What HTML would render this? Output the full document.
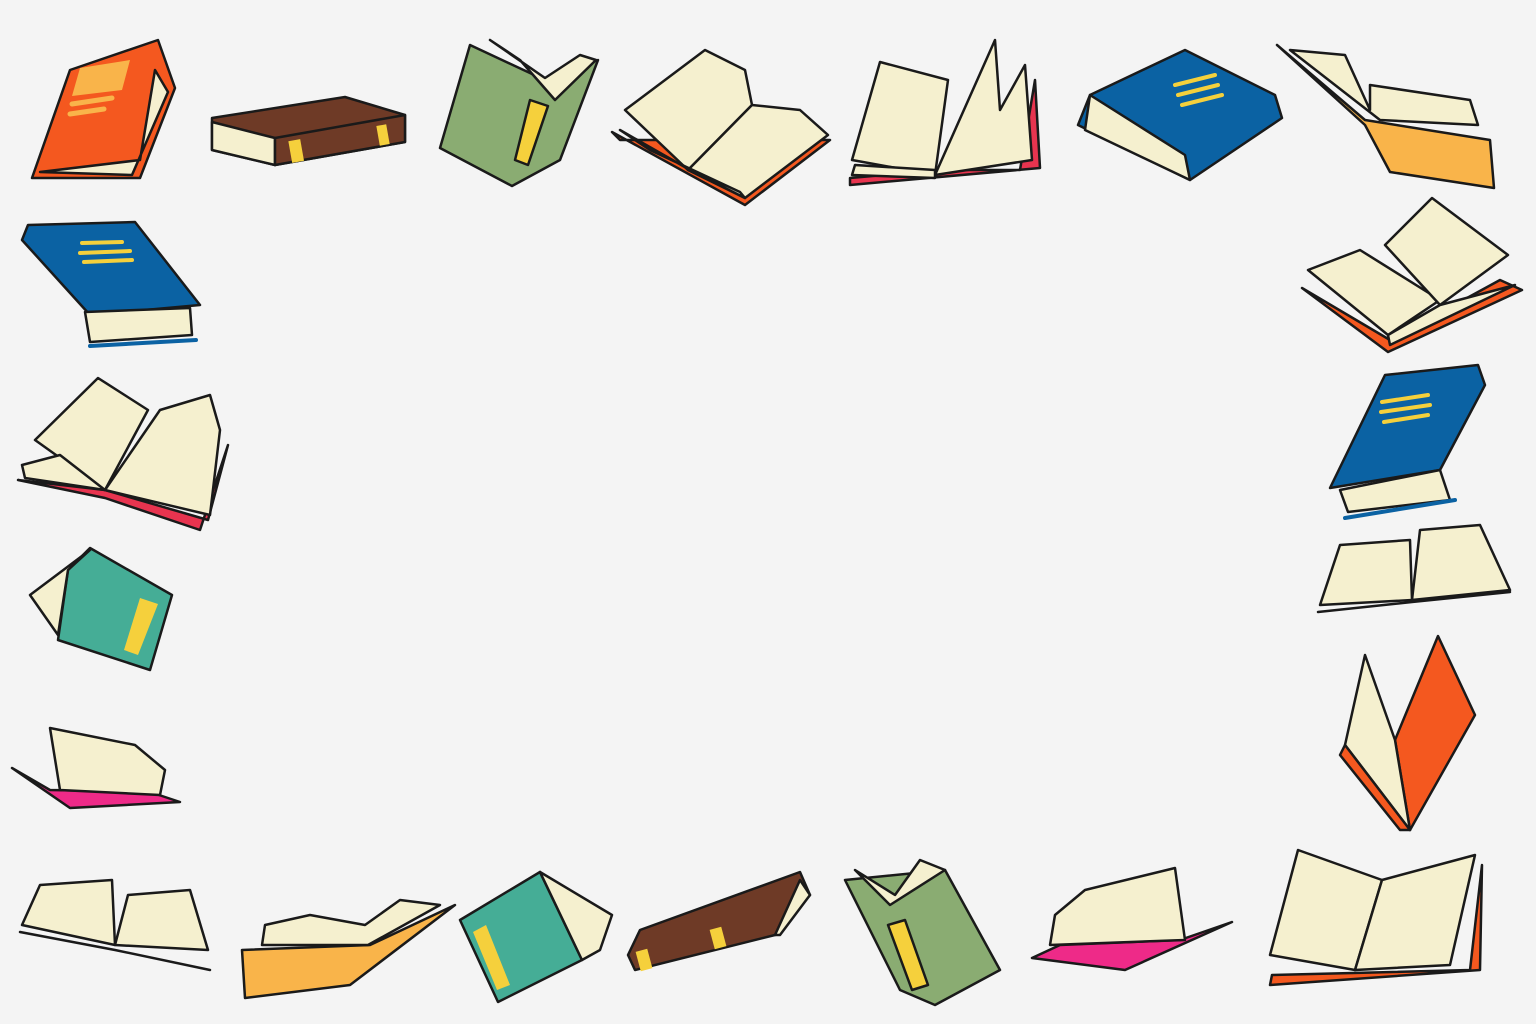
<!DOCTYPE html>
<html><head><meta charset="utf-8"><style>
html,body{margin:0;padding:0;background:#f4f4f4;}
svg{display:block}
</style></head><body>
<svg width="1536" height="1024" viewBox="0 0 1536 1024" xmlns="http://www.w3.org/2000/svg">
<rect width="1536" height="1024" fill="#f4f4f4"/>
<g stroke="#1a1a1a" stroke-width="2.5" stroke-linejoin="round" stroke-linecap="round">

<!-- 1 orange book -->
<polygon points="158,40 175,88 140,178 32,178 70,70" fill="#f4581f"/>
<polygon points="155,70 168,92 132,175 40,172 140,160" fill="#f5f0cf"/>
<polygon points="80,68 130,60 122,90 72,96" fill="#f9b44a" stroke="none"/>
<line x1="72" y1="104" x2="112" y2="98" stroke="#f9b44a" stroke-width="5"/>
<line x1="70" y1="114" x2="104" y2="109" stroke="#f9b44a" stroke-width="5"/>

<!-- 2 brown book -->
<polygon points="212,118 345,97 405,115 405,142 275,165 212,150" fill="#6e3a26"/>
<polygon points="212,122 275,138 275,165 212,150" fill="#f5f0cf"/>
<polygon points="275,138 405,115 405,142 275,165" fill="#6e3a26"/>
<rect x="290" y="140" width="12" height="22" fill="#f5d03c" stroke="none" transform="rotate(-10 296 150)"/>
<rect x="378" y="125" width="10" height="20" fill="#f5d03c" stroke="none" transform="rotate(-10 383 135)"/>

<!-- 3 green book -->
<polygon points="470,45 545,80 598,60 560,160 512,186 440,148" fill="#8aac72"/>
<polygon points="490,40 545,78 580,55 596,60 555,100 520,60" fill="#f5f0cf"/>
<polygon points="530,100 548,106 528,165 515,160" fill="#f5d03c"/>

<!-- 4 open book orange base -->
<polygon points="612,132 745,205 830,140 620,140" fill="#f4581f"/>
<polygon points="625,110 705,50 745,70 752,105 688,170" fill="#f5f0cf"/>
<polygon points="688,170 752,105 800,110 828,135 745,198" fill="#f5f0cf"/>
<polygon points="620,130 690,170 745,198 740,192 650,150" fill="#f5f0cf"/>

<!-- 5 open book red base -->
<polygon points="850,185 1040,168 1035,80 1020,170 940,170 850,178" fill="#e8344f"/>
<polygon points="852,160 880,62 948,80 935,175" fill="#f5f0cf"/>
<polygon points="935,175 995,40 1000,110 1025,65 1032,160" fill="#f5f0cf"/>
<polygon points="852,175 935,178 935,170 855,165" fill="#f5f0cf"/>

<!-- 6 blue book -->
<polygon points="1090,95 1185,50 1275,95 1282,118 1190,180 1078,125" fill="#0b62a3"/>
<polygon points="1090,95 1185,155 1190,180 1085,130" fill="#f5f0cf"/>
<line x1="1175" y1="85" x2="1215" y2="75" stroke="#f5d03c" stroke-width="4"/>
<line x1="1178" y1="95" x2="1218" y2="85" stroke="#f5d03c" stroke-width="4"/>
<line x1="1182" y1="105" x2="1222" y2="95" stroke="#f5d03c" stroke-width="4"/>

<!-- 7 yellow open book -->
<polygon points="1277,45 1365,120 1490,140 1494,188 1390,172 1365,125" fill="#f9b44a"/>
<polygon points="1290,50 1345,55 1370,110 1370,85 1470,100 1478,125 1380,120" fill="#f5f0cf"/>

<!-- 8 open book orange base right -->
<polygon points="1302,288 1388,352 1522,290 1500,280 1390,340" fill="#f4581f"/>
<polygon points="1308,270 1360,250 1440,300 1388,335" fill="#f5f0cf"/>
<polygon points="1385,245 1432,198 1508,255 1440,305" fill="#f5f0cf"/>
<polygon points="1388,335 1440,305 1515,285 1390,345" fill="#f5f0cf"/>

<!-- 9 blue book right -->
<polygon points="1385,375 1478,365 1485,385 1440,470 1330,488" fill="#0b62a3"/>
<polygon points="1340,490 1440,470 1450,500 1348,512" fill="#f5f0cf"/>
<line x1="1345" y1="518" x2="1455" y2="500" stroke="#0b62a3" stroke-width="4"/>
<line x1="1382" y1="402" x2="1428" y2="395" stroke="#f5d03c" stroke-width="4"/>
<line x1="1381" y1="412" x2="1430" y2="405" stroke="#f5d03c" stroke-width="4"/>
<line x1="1384" y1="422" x2="1428" y2="415" stroke="#f5d03c" stroke-width="4"/>

<!-- 10 open book right -->
<polygon points="1320,605 1340,545 1410,540 1412,600" fill="#f5f0cf"/>
<polygon points="1412,600 1420,530 1480,525 1510,590" fill="#f5f0cf"/>
<polyline points="1318,612 1412,602 1510,592" fill="none"/>

<!-- 11 orange vertical book -->
<polygon points="1438,636 1475,715 1410,830 1395,740" fill="#f4581f"/>
<polygon points="1365,655 1395,740 1410,830 1345,745" fill="#f5f0cf"/>
<polygon points="1345,745 1410,830 1400,830 1340,755" fill="#f4581f"/>

<!-- 12 open book bottom right -->
<polygon points="1270,985 1480,970 1482,865 1470,970 1272,975" fill="#f4581f"/>
<polygon points="1270,955 1298,850 1382,880 1355,970" fill="#f5f0cf"/>
<polygon points="1355,970 1382,880 1475,855 1450,965" fill="#f5f0cf"/>

<!-- 13 blue book left -->
<polygon points="28,225 135,222 200,305 90,315 22,240" fill="#0b62a3"/>
<polygon points="85,312 190,308 192,335 90,342" fill="#f5f0cf"/>
<line x1="90" y1="346" x2="196" y2="340" stroke="#0b62a3" stroke-width="4"/>
<line x1="82" y1="243" x2="122" y2="242" stroke="#f5d03c" stroke-width="4"/>
<line x1="80" y1="253" x2="130" y2="251" stroke="#f5d03c" stroke-width="4"/>
<line x1="84" y1="262" x2="132" y2="260" stroke="#f5d03c" stroke-width="4"/>

<!-- 14 open book red base left -->
<polygon points="18,480 105,498 200,530 228,445 208,520 105,490" fill="#e8344f"/>
<polygon points="35,440 98,378 148,410 105,490" fill="#f5f0cf"/>
<polygon points="105,490 160,410 210,395 220,430 210,515" fill="#f5f0cf"/>
<polygon points="22,465 60,455 105,490 25,478" fill="#f5f0cf"/>

<!-- 15 teal book left -->
<polygon points="90,548 172,595 150,670 58,640 68,570" fill="#45ad96"/>
<polygon points="30,595 90,550 68,570 58,635" fill="#f5f0cf"/>
<polygon points="140,598 158,604 138,655 124,650" fill="#f5d03c" stroke="none"/>

<!-- 16 pink base open book -->
<polygon points="12,768 70,808 180,802 150,792 50,790" fill="#ee2a88"/>
<polygon points="50,728 60,790 160,795 165,770 135,745" fill="#f5f0cf"/>

<!-- 17 open book bottom left -->
<polygon points="22,925 40,885 112,880 115,945" fill="#f5f0cf"/>
<polygon points="115,945 128,895 190,890 208,950" fill="#f5f0cf"/>
<polyline points="20,932 115,950 210,970" fill="none"/>

<!-- 18 yellow open book bottom -->
<polygon points="242,950 370,945 455,905 350,985 245,998" fill="#f9b44a"/>
<polygon points="265,925 310,915 365,925 400,900 440,905 368,945 262,945" fill="#f5f0cf"/>

<!-- 19 teal book bottom -->
<polygon points="460,920 540,872 582,960 498,1002" fill="#45ad96"/>
<polygon points="540,872 612,915 600,950 582,960" fill="#f5f0cf"/>
<polygon points="473,932 486,925 510,985 497,990" fill="#f5d03c" stroke="none"/>

<!-- 20 brown book bottom -->
<polygon points="640,930 800,872 810,895 775,935 635,970 628,955" fill="#6e3a26"/>
<polygon points="775,935 800,880 810,895 780,935" fill="#f5f0cf"/>
<rect x="712" y="928" width="12" height="20" fill="#f5d03c" stroke="none" transform="rotate(-15 718 938)"/>
<rect x="638" y="950" width="12" height="20" fill="#f5d03c" stroke="none" transform="rotate(-15 644 960)"/>

<!-- 21 green book bottom -->
<polygon points="845,880 945,870 1000,970 935,1005 900,990" fill="#8aac72"/>
<polygon points="855,870 895,895 920,860 945,870 890,905" fill="#f5f0cf"/>
<polygon points="888,925 905,920 928,985 912,990" fill="#f5d03c"/>

<!-- 22 pink base open book -->
<polygon points="1032,958 1125,970 1232,922 1180,940 1060,945" fill="#ee2a88"/>
<polygon points="1055,915 1085,890 1175,868 1185,940 1050,945" fill="#f5f0cf"/>
</g>
</svg>
</body></html>
